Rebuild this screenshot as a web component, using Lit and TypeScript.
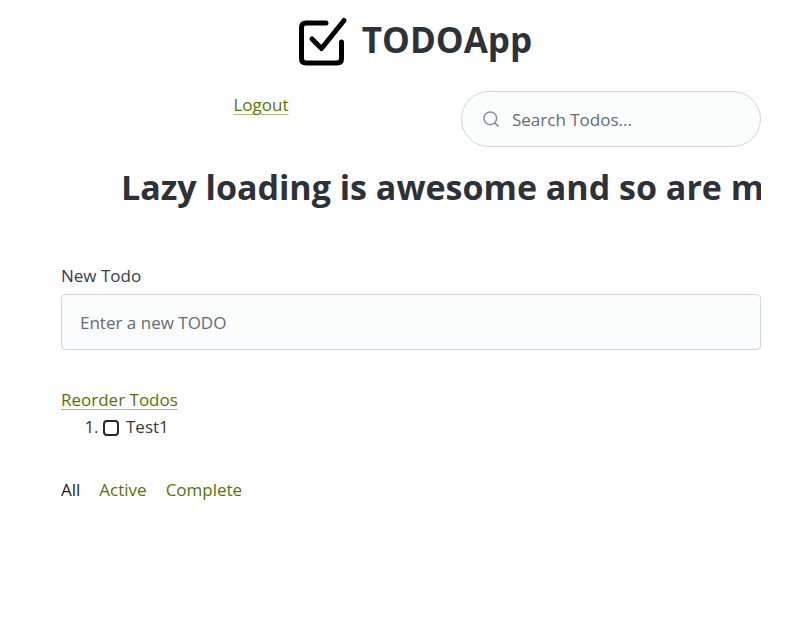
import { LitElement, html, css } from "lit";
import { customElement, state } from "lit/decorators.js";

interface Todo {
  title: string;
  done: boolean;
}

@customElement("app-root")
export class AppRoot extends LitElement {
  @state() private todos: Todo[] = [{ title: "Test1", done: false }];
  @state() private filter = "All";

  static styles = css`
    :host {
      display: block;
      box-sizing: border-box;
      max-width: 809px;
      padding: 16px 48px 32px 61px;
      background: #fff;
      color: #373c44;
      font: 17px/27px "Open Sans", "Noto Sans", sans-serif;
    }
    * {
      box-sizing: border-box;
    }
    h1,
    h2 {
      margin: 0;
      font-size: 35px;
      line-height: 48px;
      font-weight: 700;
      color: #2d3138;
    }
    .brand {
      display: flex;
      justify-content: center;
      gap: 14px;
      padding-left: 8px;
    }
    .logo {
      width: 50px;
      height: 50px;
    }
    .top {
      display: grid;
      grid-template-columns: 1fr 300px;
      margin-top: 25px;
    }
    .account {
      text-align: center;
    }
    a {
      color: #577400;
      text-decoration: none;
    }
    .underlined {
      text-decoration: underline;
      text-decoration-color: #abba80;
      text-decoration-thickness: 1px;
      text-underline-offset: 3px;
    }
    .search {
      display: flex;
      align-items: center;
      gap: 12px;
      height: 56px;
      padding: 0 20px;
      border: 1px solid #cfd5e2;
      border-radius: 28px;
      background: #fbfcfc;
    }
    .search svg {
      flex: none;
      width: 18px;
      height: 18px;
    }
    input {
      font: inherit;
      color: #373c44;
    }
    input::placeholder {
      color: #646b79;
      opacity: 1;
    }
    .search input {
      flex: 1;
      min-width: 0;
      padding: 0;
      border: 0;
      outline: 0;
      background: none;
    }
    .ticker {
      margin-top: 16px;
      padding-left: 60px;
      font-size: 34px;
      overflow: hidden;
      white-space: nowrap;
    }
    .field {
      display: block;
      margin-top: 51px;
    }
    .field input {
      display: block;
      width: 100%;
      height: 56px;
      margin-top: 5px;
      padding: 0 18px;
      border: 1px solid #cfd5e2;
      border-radius: 4px;
      background: #fbfcfc;
    }
    .list {
      margin-top: 36px;
    }
    ol {
      margin: 0;
      padding-left: 42px;
    }
    .item {
      display: inline-flex;
      align-items: center;
      gap: 7px;
      vertical-align: top;
    }
    .item input {
      appearance: none;
      width: 16px;
      height: 16px;
      margin: 2px 0 0;
      border: 2px solid #24282e;
      border-radius: 4px;
      background: #fff;
    }
    .item input:checked {
      background: #577400;
    }
    .filters {
      display: flex;
      gap: 19px;
      margin-top: 36px;
    }
    .current {
      color: #181c25;
    }
  `;

  private toggle(todo: Todo) {
    this.todos = this.todos.map((t) => (t === todo ? { ...t, done: !t.done } : t));
  }

  private get visible() {
    if (this.filter === "Active") return this.todos.filter((t) => !t.done);
    if (this.filter === "Complete") return this.todos.filter((t) => t.done);
    return this.todos;
  }

  private pick(event: Event, name: string) {
    event.preventDefault();
    this.filter = name;
  }

  render() {
    return html`
      <header class="brand">
        <svg class="logo" viewBox="0 0 50 50" fill="none" stroke="#000" stroke-width="5" stroke-linecap="round" stroke-linejoin="round" aria-hidden="true">
          <path d="M28 7H8Q3.500 7 3.500 11.500V42.500Q3.500 47 8 47H39Q43.500 47 43.500 42.500V26" />
          <path d="M14 23L23.500 32.500L46 4.500" />
        </svg>
        <h1>TODOApp</h1>
      </header>
      <div class="top">
        <div class="account"><a class="underlined" href="#logout">Logout</a></div>
        <label class="search">
          <svg viewBox="0 0 24 24" fill="none" stroke="#8891a4" stroke-width="2" stroke-linecap="round" stroke-linejoin="round" aria-hidden="true">
            <circle cx="11" cy="11" r="8.500" />
            <path d="M21.500 21.500L17 17" />
          </svg>
          <input type="search" placeholder="Search Todos..." aria-label="Search Todos" />
        </label>
      </div>
      <h2 class="ticker">Lazy loading is awesome and so are m</h2>
      <label class="field">
        New Todo
        <input type="text" placeholder="Enter a new TODO" />
      </label>
      <section class="list">
        <a class="underlined" href="#reorder">Reorder Todos</a>
        <ol>
          ${this.visible.map(
            (todo) => html`<li>
              <label class="item">
                <input type="checkbox" .checked=${todo.done} @change=${() => this.toggle(todo)} />
                ${todo.title}
              </label>
            </li>`
          )}
        </ol>
      </section>
      <nav class="filters">
        ${["All", "Active", "Complete"].map(
          (name) => html`<a
            href="#${name.toLowerCase()}"
            class=${this.filter === name ? "current" : ""}
            @click=${(e: Event) => this.pick(e, name)}
            >${name}</a
          >`
        )}
      </nav>
    `;
  }
}
